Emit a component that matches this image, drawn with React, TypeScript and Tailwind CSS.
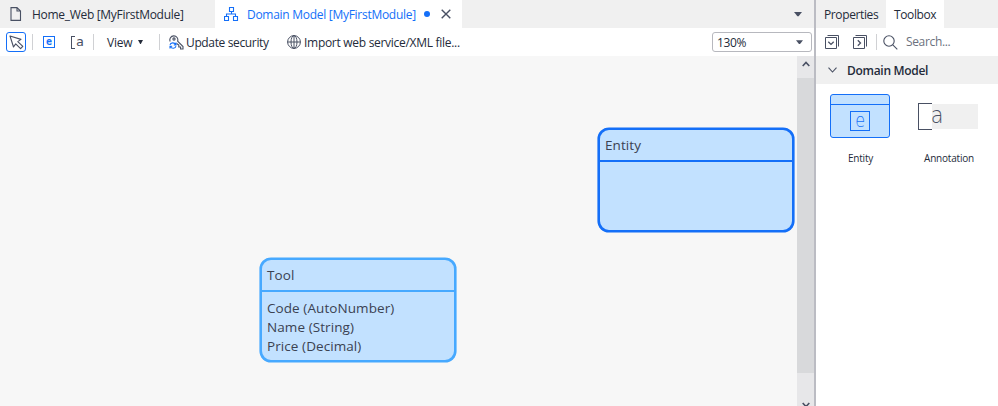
import React from "react";

function Label({ className = "", children }: { className?: string; children: React.ReactNode }) {
  return <span className={`block shrink-0 whitespace-nowrap ${className}`}>{children}</span>;
}

function Separator({ className = "" }: { className?: string }) {
  return <div className={`h-4 w-px shrink-0 bg-[#d0d1d4] ${className}`} />;
}

function Caret({ className = "" }: { className?: string }) {
  return (
    <svg width="8" height="5" viewBox="0 0 8 5" className={`shrink-0 ${className}`} fill="#495063">
      <path d="M0 0H8L4.6 4.3H3.4Z" />
    </svg>
  );
}

function PageIcon() {
  return (
    <svg width="12" height="14" viewBox="0 0 12 14" fill="none" stroke="#495063" strokeWidth="1.1" className="ml-[10px] shrink-0">
      <path d="M1 .6H7L10.5 4V13.4H1ZM7 .6V4H10.5" />
    </svg>
  );
}

function ModelIcon() {
  return (
    <svg width="15" height="14" viewBox="0 0 15 14" fill="none" stroke="#146ff8" strokeWidth="1.1" className="ml-[9px] shrink-0">
      <path d="M5.5.5H9.5V4.5H5.5ZM.5 9.5H4.5V13.5H.5ZM9.5 9.5H13.5V13.5H9.5ZM7.5 4.5V7M2.5 9.5V7H11.5V9.5" />
    </svg>
  );
}

function Tabs() {
  return (
    <div className="flex h-7 items-center bg-[#f0f0f0]">
      <div className="flex h-7 w-[215px] items-center">
        <PageIcon />
        <Label className="ml-[10px] pt-px text-[12px] tracking-[-0.3px]">Home_Web [MyFirstModule]</Label>
      </div>
      <div className="flex h-7 w-[247px] items-center bg-white text-[#146ff8]">
        <ModelIcon />
        <Label className="ml-[8px] w-[177px] pt-px text-[12px] tracking-[-0.28px]">Domain Model [MyFirstModule]</Label>
        <div className="size-[6px] rounded-full bg-[#146ff8]" />
        <svg width="10" height="10" viewBox="0 0 10 10" stroke="#495063" strokeWidth="1.4" className="ml-[11px]">
          <path d="M.7.7L9.3 9.3M9.3.7L.7 9.3" />
        </svg>
      </div>
      <Caret className="mr-[12px] ml-auto" />
    </div>
  );
}

function Toolbar() {
  return (
    <div className="flex h-7 items-center bg-white">
      <div className="ml-[6px] flex size-5 shrink-0 items-center justify-center rounded-[3px] border border-[#146ff8]">
        <svg width="15" height="15" viewBox="0 0 15 15" fill="none" stroke="#495063" strokeWidth="1.1" strokeLinejoin="round">
          <path d="M1 1L12 4.4L8.8 6.6L13.8 11.4L11.6 13.7L6.7 8.9L4.5 12Z" />
        </svg>
      </div>
      <Separator className="ml-[6px]" />
      <div className="ml-[10px] flex size-3 shrink-0 items-center justify-center border border-[#146ff8] text-[#146ff8]">
        <span className="-mt-px font-['DejaVu_Sans_Mono',monospace] text-[10px] leading-[10px] font-bold">e</span>
      </div>
      <div className="ml-[16px] flex h-[14px] w-[13px] shrink-0 items-center">
        <div className="h-[13px] w-1 border-y border-l border-[#495063]" />
        <span className="ml-px font-['DejaVu_Sans_Mono',monospace] text-[13px] leading-3 text-[#495063]">a</span>
      </div>
      <Separator className="ml-[9px]" />
      <Label className="ml-[13px] w-[31px] pt-px text-[12px] tracking-[-0.2px]">View</Label>
      <svg width="5" height="4" viewBox="0 0 5 4" className="shrink-0 fill-[#242b3a]">
        <path d="M0 0H5L2.8 4H2.2Z" />
      </svg>
      <Separator className="ml-4" />
      <svg width="15" height="15" viewBox="0 0 15 15" fill="none" stroke="#495063" strokeWidth="1.1" className="ml-[9px] shrink-0">
        <path d="M1.2 6.5A4 4 0 1 1 8.6 6.2L14 11.5V14H11.6V12H9.8V10L7.6 8.5" />
        <circle cx="5" cy="4" r="1.1" />
        <path d="M1 9.8C1.5 7.5 5.5 7 6.7 9.7M7 7.5V10H4.8M7 11.2C6.4 13.8 2.5 14 1.4 11.4M1 13.6V11.2H3.2" stroke="#146ff8" />
      </svg>
      <Label className="ml-[2px] w-[101px] pt-px text-[12px] tracking-[-0.36px]">Update security</Label>
      <svg width="14" height="14" viewBox="0 0 14 14" fill="none" stroke="#495063" strokeWidth="1" className="shrink-0">
        <circle cx="7" cy="7" r="6.4" />
        <ellipse cx="7" cy="7" rx="3" ry="6.4" />
        <path d="M.6 7H13.4M7 .6V13.4" />
      </svg>
      <Label className="ml-[3px] pt-px text-[12px] tracking-[-0.29px]">Import web service/XML file...</Label>
      <div className="mr-[2px] ml-auto flex h-5 w-[100px] items-center rounded-[3px] border border-[#b7b8be] pl-[4px]">
        <Label className="pt-px text-[12px] tracking-[-0.35px]">130%</Label>
        <Caret className="mr-[8px] ml-auto w-[7px]" />
      </div>
    </div>
  );
}

interface EntityBoxProps {
  name: string;
  attributes: string[];
  tone: string;
  glow: string;
  place: string;
}

function EntityBox({ name, attributes, tone, glow, place }: EntityBoxProps) {
  return (
    <div className={`absolute h-[104px] w-[196px] rounded-[11px] border-2 bg-[#c2e1ff] text-[13.5px] tracking-[0.08px] text-[#3b4252] ${tone} ${glow} ${place}`}>
      <div className={`flex h-[32px] items-center border-b-2 pt-px pl-[5px] ${tone}`}>{name}</div>
      <div className="pt-[7px] pl-[5px] leading-[19px]">
        {attributes.map((a) => (
          <Label key={a}>{a}</Label>
        ))}
      </div>
    </div>
  );
}

function ScrollArrow({ className = "" }: { className?: string }) {
  return (
    <svg width="8" height="6" viewBox="0 0 8 6" fill="none" stroke="#495063" strokeWidth="1.6" className={className}>
      <path d="M.7 5L4 1.4L7.3 5" />
    </svg>
  );
}

function Canvas() {
  return (
    <div className="flex h-[350px]">
      <div className="relative w-[797px] overflow-hidden bg-[#f7f7f7]">
        <EntityBox
          name="Entity"
          attributes={[]}
          tone="border-[#146ff8]"
          glow="shadow-[0_0_0_0.6px_#146ff8]"
          place="left-[598px] top-[72px]"
        />
        <EntityBox
          name="Tool"
          attributes={["Code (AutoNumber)", "Name (String)", "Price (Decimal)"]}
          tone="border-[#47a9ff]"
          glow="shadow-[0_0_0_0.6px_#47a9ff]"
          place="left-[260px] top-[202px]"
        />
      </div>
      <div className="flex w-[17px] flex-col items-center overflow-hidden bg-[#e7e7e9]">
        <div className="h-[22px] shrink-0 pt-[5px]"><ScrollArrow /></div>
        <div className="h-[295px] w-full shrink-0 bg-[#d8d9db]" />
        <div className="mt-[29px] shrink-0"><ScrollArrow className="rotate-180" /></div>
      </div>
    </div>
  );
}

function FoldIcon({ d, className }: { d: string; className: string }) {
  return (
    <svg width="14" height="14" viewBox="0 0 14 14" fill="none" stroke="#495063" strokeWidth="1" className={`shrink-0 ${className}`}>
      <path d="M.5 2.5H11.5V13.5H.5ZM2.5 .5H13.5V11.5" />
      <path d={d} strokeWidth="1.3" />
    </svg>
  );
}

function SidePanel() {
  return (
    <div className="w-[182px] bg-white">
      <div className="flex h-7 items-center bg-[#f0f0f0] text-[12px] tracking-[-0.38px]">
        <Label className="w-[70px] pt-px pl-2">Properties</Label>
        <div className="flex h-7 w-[58px] items-center bg-white pt-px pl-2">
          <Label>Toolbox</Label>
        </div>
      </div>
      <div className="flex h-7 items-center">
        <FoldIcon className="ml-[9px]" d="M3.3 6.7L6 9.4L8.7 6.7" />
        <FoldIcon className="ml-[14px]" d="M4.8 5.3L7.5 8L4.8 10.7" />
        <Separator className="ml-[9px]" />
        <svg width="15" height="15" viewBox="0 0 15 15" fill="none" stroke="#495063" strokeWidth="1.1" className="ml-[6px] shrink-0">
          <circle cx="6" cy="6" r="5.2" />
          <path d="M9.8 9.8L14.3 14.3" />
        </svg>
        <Label className="ml-[8px] text-[12px] tracking-[-0.35px] text-[#6c717e]">Search...</Label>
      </div>
      <div className="flex h-7 items-center bg-[#f0f0f0]">
        <svg width="9" height="6" viewBox="0 0 9 6" fill="none" stroke="#495063" strokeWidth="1.1" className="ml-[12px]">
          <path d="M.5.7L4.5 5L8.5.7" />
        </svg>
        <Label className="ml-[10px] pt-px text-[12px] font-semibold tracking-[-0.3px]">Domain Model</Label>
      </div>
      <div className="flex pt-[10px] text-[10px] tracking-[-0.2px]">
        <div className="flex w-[88px] flex-col items-center">
          <div className="h-11 w-[60px] rounded-[3px] border border-[#146ff8] bg-[#c2e1ff]">
            <div className="h-[10px] border-b border-[#146ff8]" />
            <div className="mx-auto mt-[6px] flex size-5 items-center justify-center border border-[#146ff8] text-[#146ff8]">
              <span className="-mt-[3px] scale-x-80 font-['DejaVu_Sans',sans-serif] text-[20px] leading-[18px] font-extralight tracking-normal">e</span>
            </div>
          </div>
          <Label className="mt-[13px] pl-px leading-[14px]">Entity</Label>
        </div>
        <div className="flex w-[88px] flex-col items-center">
          <div className="flex h-11 w-[60px] items-center">
            <div className="h-[27px] w-[14px] border-y border-l border-[#495063]" />
            <div className="flex h-[25px] flex-1 items-center bg-[#f0f0f0] text-[#495063]">
              <span className="-mt-[3px] -ml-[2px] scale-x-90 font-['DejaVu_Sans',sans-serif] text-[23px] leading-5 font-extralight tracking-normal">a</span>
            </div>
          </div>
          <Label className="mt-[13px] pl-[2px] leading-[14px]">Annotation</Label>
        </div>
      </div>
    </div>
  );
}

export default function App() {
  return (
    <div className="flex h-[406px] w-[998px] overflow-hidden bg-white font-['Open_Sans','Noto_Sans',sans-serif] text-[#242b3a]">
      <div className="w-[814px]">
        <Tabs />
        <Toolbar />
        <Canvas />
      </div>
      <div className="w-[2px] bg-[#bbbcc3]" />
      <SidePanel />
    </div>
  );
}
